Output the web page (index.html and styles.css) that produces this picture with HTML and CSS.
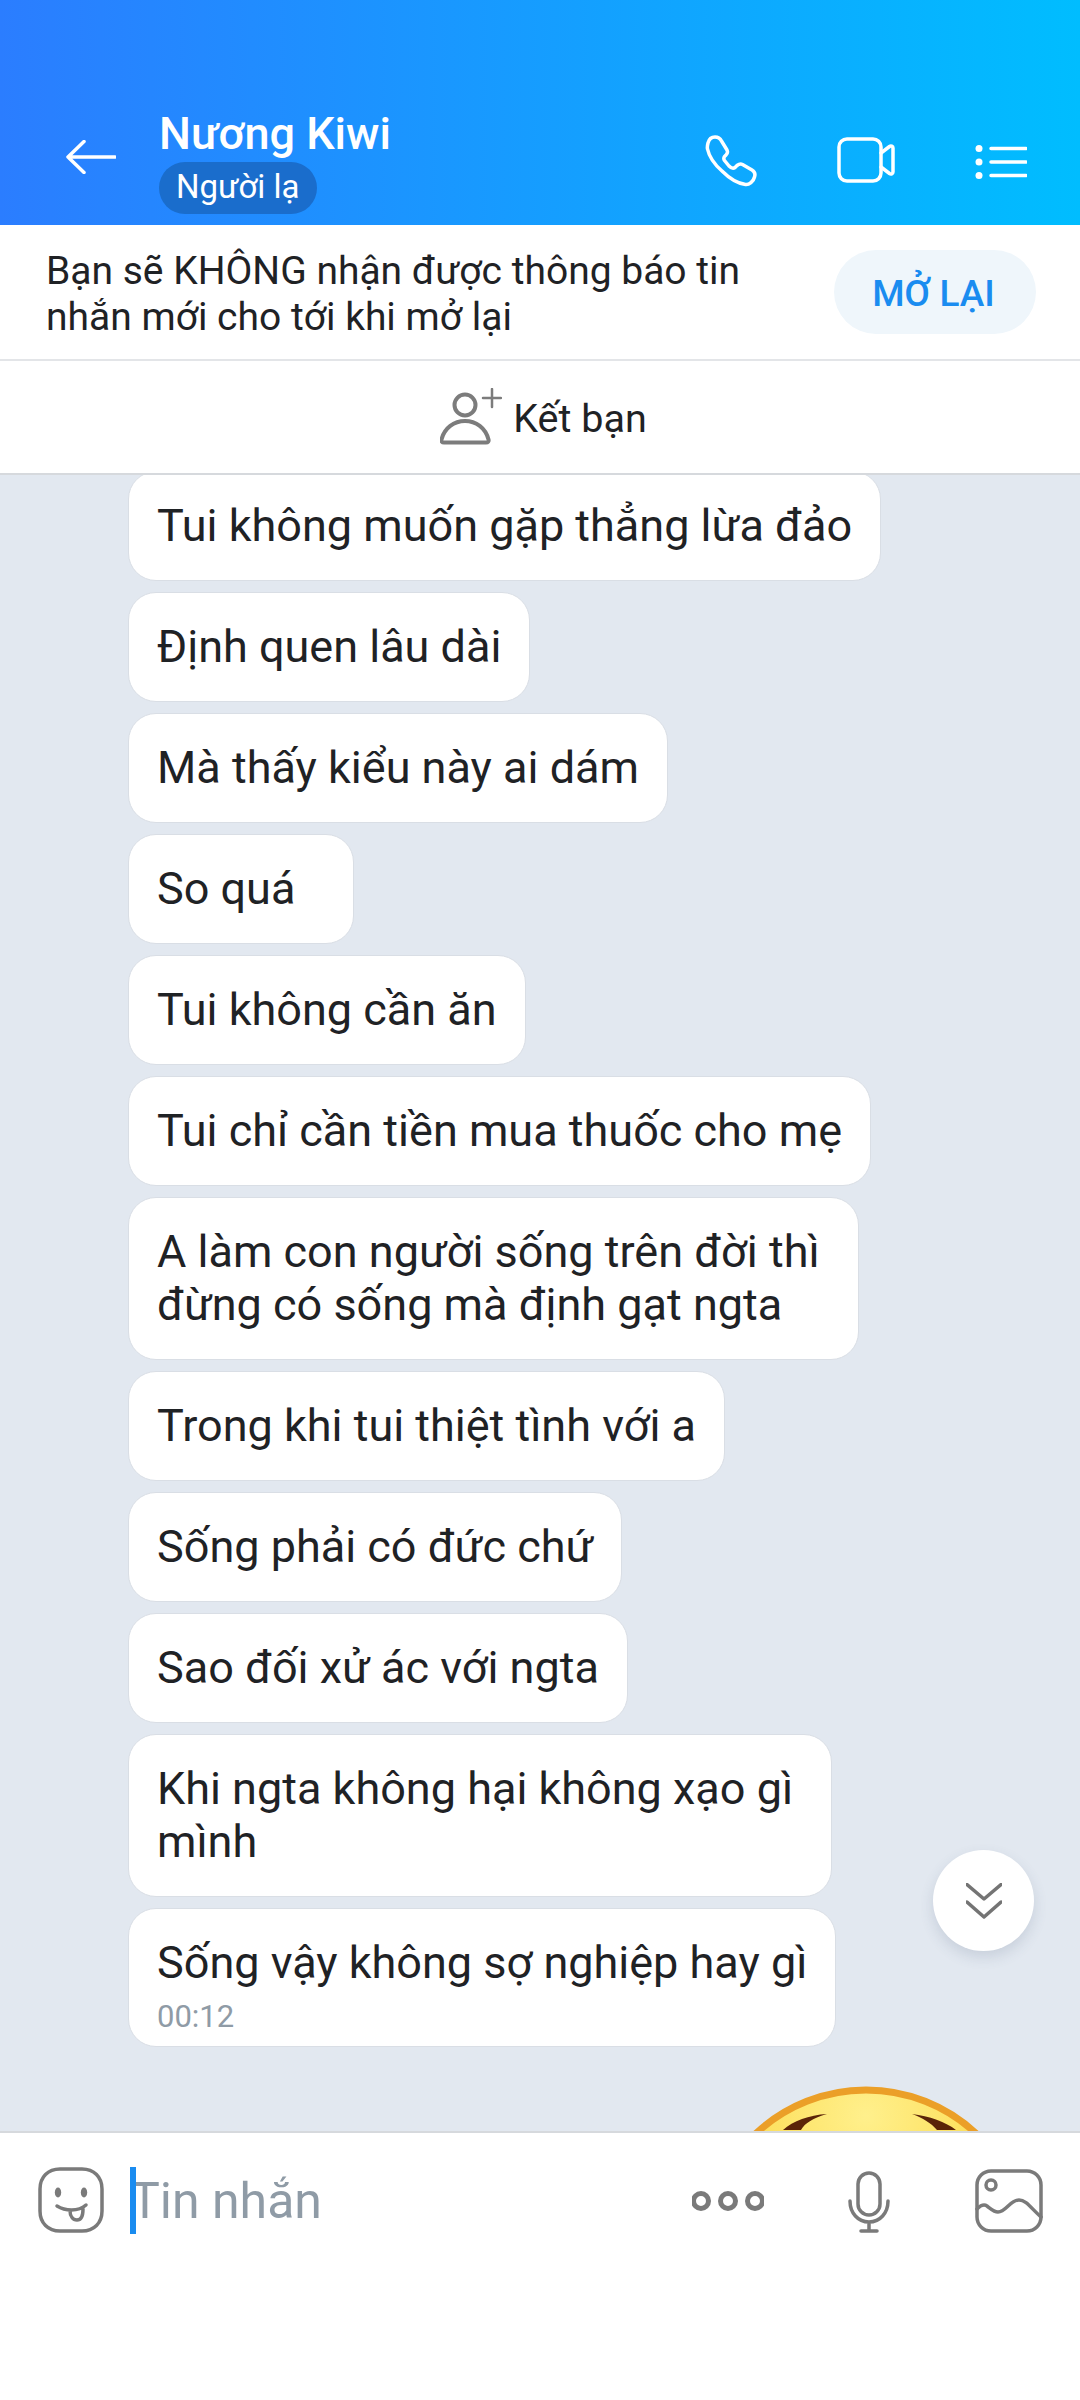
FILE: index.html
```html
<!DOCTYPE html>
<html lang="vi">
<head>
  <meta charset="UTF-8" />
  <meta name="viewport" content="width=device-width, initial-scale=1" />
  <title>Nương Kiwi</title>
  <link rel="stylesheet" href="styles.css">
</head>
<body>

  <header class="topbar">
    <svg class="icon-back" viewBox="0 0 50 34"><path d="M49 17H2M18 1.500 2 17l16 15.500"/></svg>
    <div class="peer">
      <div class="peer-name">Nương Kiwi</div>
      <span class="peer-tag">Người lạ</span>
    </div>
    <svg class="icon-phone" viewBox="0 0 52 52"><path d="M3 8C4 4 7 2 10 2c3 0 5 1 6.500 4L22 15c1 2 .5 3.500-1 5l-1.500 1.500c-1 1.500-1 2.500 0 4L24 31c2 2 4 3 6 1.500l2-2c2-1.500 3.500-2 5.500-1L47 35c2.500 1.500 3.500 4 2.500 7-1 4.500-5.500 8-9 7.500-7.500-1-16.500-6.500-23.500-13.500C9 29 4 21 2.500 14 2 12 2.500 10 3 8Z"/></svg>
    <svg class="icon-video" viewBox="0 0 58 46"><path d="M10 2h26a8 8 0 0 1 8 8v26a8 8 0 0 1-8 8H10a8 8 0 0 1-8-8V10a8 8 0 0 1 8-8Z"/><path d="m44 16 8.500-6.500c1.500-1 3.500-.2 3.500 1.500v24c0 1.700-2 2.500-3.500 1.500L44 30"/></svg>
    <svg class="icon-list" viewBox="0 0 52 34"><circle cx="4" cy="3.500" r="3.500"/><circle cx="4" cy="17" r="3.500"/><circle cx="4" cy="30.500" r="3.500"/><path d="M16 3.500h35M16 17h35M16 30.500h35"/></svg>
  </header>

  <section class="notice">
    <p class="notice-text">Bạn sẽ KHÔNG nhận được thông báo tin nhắn mới cho tới khi mở lại</p>
    <button class="notice-btn">MỞ LẠI</button>
  </section>

  <section class="add-friend">
    <svg class="icon-add" viewBox="0 0 62 58"><circle cx="25" cy="17" r="10.500"/><path d="M4 54.500c-2 0-3-1.200-2.500-3C4.500 40 14 33 25 33s20.500 7 23.500 18.500c.5 1.800-.5 3-2.500 3Z"/><path class="thin" d="M52 1v18M43 10h18"/></svg>
    <span class="add-label">Kết bạn</span>
  </section>

  <main class="chat">
    <div class="bubble">Tui không muốn gặp thẳng lừa đảo</div>
    <div class="bubble">Định quen lâu dài</div>
    <div class="bubble">Mà thấy kiểu này ai dám</div>
    <div class="bubble bubble-short">So quá</div>
    <div class="bubble">Tui không cần ăn</div>
    <div class="bubble">Tui chỉ cần tiền mua thuốc cho mẹ</div>
    <div class="bubble bubble-wrap">A làm con người sống trên đời thì<br>đừng có sống mà định gạt ngta</div>
    <div class="bubble">Trong khi tui thiệt tình với a</div>
    <div class="bubble">Sống phải có đức chứ</div>
    <div class="bubble">Sao đối xử ác với ngta</div>
    <div class="bubble bubble-wrap">Khi ngta không hại không xạo gì<br>mình</div>
    <div class="bubble bubble-last">
      Sống vậy không sợ nghiệp hay gì
      <div class="time">00:12</div>
    </div>

    <svg class="sticker" viewBox="0 0 330 330">
      <defs>
        <radialGradient id="face" cx="50%" cy="8%" r="60%">
          <stop offset="0" stop-color="#fff08c"/>
          <stop offset="1" stop-color="#fbd338"/>
        </radialGradient>
      </defs>
      <circle cx="165" cy="165" r="161" fill="url(#face)" stroke="#eb9f28" stroke-width="7"/>
      <path d="M82 44C92 35 108 29 126 28 112 32 104 37 100 44Z" fill="#5b2408"/>
      <path d="M211 28C228 30 245 36 255 44H236C230 37 222 32 211 28Z" fill="#5b2408"/>
    </svg>

    <button class="scroll-down">
      <svg viewBox="0 0 36 36"><path d="M1 1.500 18 16 35 1.500M1 19 18 34 35 19"/></svg>
    </button>
  </main>

  <footer class="composer">
    <svg class="icon-emoji" viewBox="0 0 66 66"><path d="M22 2h22c12 0 20 8 20 20v22c0 12-8 20-20 20H22C10 64 2 56 2 44V22C2 10 10 2 22 2Z"/><ellipse class="solid" cx="20" cy="25.500" rx="3.200" ry="5"/><ellipse class="solid" cx="46" cy="25.500" rx="3.200" ry="5"/><path d="M19 39c8 5 21 6 29-1M32 43.500c0 6 3 9.500 7 9.500s6-4 6-11"/></svg>
    <div class="msg-input">
      <span class="caret"></span>
      <span class="placeholder">Tin nhắn</span>
    </div>
    <svg class="icon-more" viewBox="0 0 72 20"><circle cx="9" cy="10" r="7.500"/><circle cx="36" cy="10" r="7.500"/><circle cx="63" cy="10" r="7.500"/></svg>
    <svg class="icon-mic" viewBox="0 0 42 62"><rect x="10" y="2" width="22" height="42" rx="11"/><path d="M2 30c0 12 8 21 19 21s19-9 19-21M21 51v9M13 60h16"/></svg>
    <svg class="icon-image" viewBox="0 0 68 64"><rect x="2" y="2" width="64" height="60" rx="14"/><circle cx="16" cy="16" r="5"/><path d="M2 40c4-4 7-5 10-3 4 3 7 6 11 6 8 0 12-12 21-12 7 0 12 8 22 17"/></svg>
  </footer>

</body>
</html>
```

FILE: styles.css
```css
* { box-sizing: border-box; }

body {
  margin: 0;
  width: 1080px;
  height: 2400px;
  overflow: hidden;
  display: flex;
  flex-direction: column;
  background-color: white;
  font-family: Roboto, 'Noto Sans', sans-serif;
  color: #1f2225;
}

svg {
  display: block;
  flex-shrink: 0;
  fill: none;
  stroke-linecap: round;
  stroke-linejoin: round;
}

/* top bar */
.topbar {
  height: 225px;
  flex-shrink: 0;
  display: flex;
  align-items: flex-start;
  padding-top: 110px;
  background: linear-gradient(90deg, #2b7dff 0%, #00bdff 100%);
}

.topbar svg { stroke: white; }

.icon-back {
  width: 50px;
  height: 34px;
  margin: 30px 0 0 66px;
  stroke-width: 3.500;
}

.peer {
  margin-left: 43px;
  width: 546px;
  color: white;
}

.peer-name {
  font-size: 45px;
  font-weight: 500;
  line-height: 48px;
}

.peer-tag {
  display: inline-block;
  margin-top: 4px;
  padding: 0 17px;
  height: 52px;
  line-height: 50px;
  font-size: 33px;
  border-radius: 26px;
  background-color: #1a6dcc;
}

.icon-phone {
  width: 52px;
  height: 52px;
  margin-top: 25px;
  stroke-width: 3.500;
}

.icon-video {
  width: 58px;
  height: 46px;
  margin: 27px 0 0 80px;
  stroke-width: 3.500;
}

.icon-list {
  width: 52px;
  height: 34px;
  margin: 35px 0 0 80px;
  stroke-width: 3.500;
}

.icon-list circle { fill: white; stroke: none; }

/* notice */
.notice {
  height: 136px;
  flex-shrink: 0;
  display: flex;
  align-items: center;
  justify-content: space-between;
  padding: 0 44px 0 46px;
  border-bottom: 2px solid #e3e5e8;
}

.notice-text {
  margin: 4px 0 0;
  width: 730px;
  font-size: 39px;
  line-height: 46px;
}

.notice-btn {
  width: 202px;
  height: 84px;
  border: none;
  border-radius: 42px;
  background-color: #eff6fb;
  color: #1a8cf0;
  font-family: inherit;
  font-size: 37px;
  font-weight: 500;
  padding: 2px 3px 0 0;
}

/* add friend */
.add-friend {
  height: 114px;
  flex-shrink: 0;
  display: flex;
  align-items: center;
  justify-content: center;
  gap: 11px;
  padding-left: 7px;
  font-size: 39.5px;
  border-bottom: 2px solid #d6d9dd;
}

.add-label { margin-top: 3px; }

.icon-add {
  width: 62px;
  height: 58px;
  stroke: #7c7c7c;
  stroke-width: 4;
}

.icon-add .thin { stroke-width: 2.500; }

/* chat */
.chat {
  position: relative;
  flex: 1;
  min-height: 0;
  overflow: hidden;
  display: flex;
  flex-direction: column;
  align-items: flex-start;
  gap: 11px;
  padding-left: 128px;
  background-color: #e2e8f0;
}

.bubble {
  padding: 27px 28px 28px;
  font-size: 45px;
  line-height: 53px;
  white-space: nowrap;
  background-color: white;
  border: 1px solid #d9dee5;
  border-radius: 28px;
}

.bubble:first-child { margin-top: -4px; }

.bubble-short { min-width: 226px; }

.bubble-wrap { padding-right: 38px; }

.bubble-last { padding-bottom: 7px; }

.time {
  margin-top: 6px;
  font-size: 31px;
  line-height: 44px;
  color: #8f9ba6;
}

.sticker {
  width: 330px;
  height: 330px;
  flex-shrink: 0;
  margin: 28px 0 0 573px;
}

.scroll-down {
  position: absolute;
  top: 1375px;
  left: 933px;
  width: 101px;
  height: 101px;
  padding: 0;
  display: flex;
  align-items: center;
  justify-content: center;
  border: none;
  border-radius: 50%;
  background-color: white;
  box-shadow: 0 6px 14px rgba(60, 80, 110, 0.16);
}

.scroll-down svg {
  width: 36px;
  height: 36px;
  stroke: #747474;
  stroke-width: 3.500;
}

/* composer */
.composer {
  height: 269px;
  flex-shrink: 0;
  display: flex;
  align-items: flex-start;
  padding-top: 34px;
  border-top: 2px solid #d6d9dd;
}

.composer svg {
  stroke: #7a7a7a;
  stroke-width: 3.500;
}

.icon-emoji {
  width: 66px;
  height: 66px;
  margin-left: 38px;
}

.icon-emoji .solid { fill: #7a7a7a; stroke: none; }

.msg-input {
  position: relative;
  width: 562px;
  height: 67px;
  margin-left: 26px;
  font-size: 50px;
  line-height: 69px;
  color: #8f9ba6;
}

.caret {
  position: absolute;
  left: 0;
  top: 0;
  width: 6px;
  height: 67px;
  background-color: #1a8cf0;
}

.composer .icon-more {
  width: 72px;
  height: 20px;
  margin-top: 24px;
  stroke-width: 5;
}

.composer .icon-mic {
  width: 42px;
  height: 62px;
  margin: 4px 0 0 84px;
}

.composer .icon-image {
  width: 68px;
  height: 64px;
  margin: 2px 0 0 85px;
}
```
